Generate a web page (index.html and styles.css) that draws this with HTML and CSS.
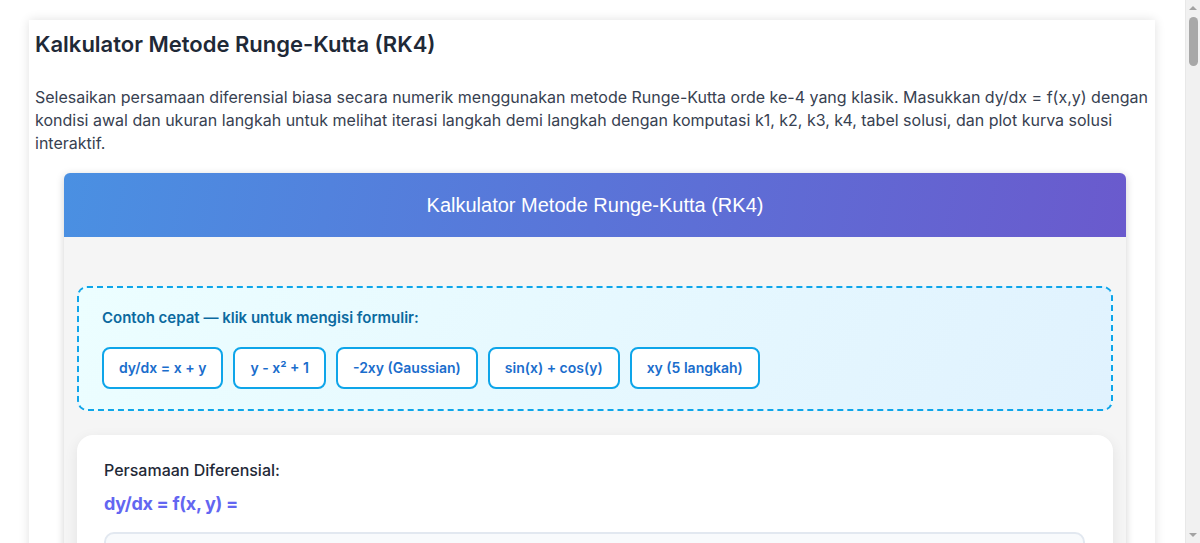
FILE: index.html
```html
<!DOCTYPE html>
<html lang="id">
<head>
<meta charset="utf-8">
<title>Kalkulator Metode Runge-Kutta (RK4)</title>
<link rel="stylesheet" href="styles.css">
</head>
<body>
<main class="page">
  <h1 class="page-title">Kalkulator Metode Runge-Kutta (RK4)</h1>
  <p class="intro">Selesaikan persamaan diferensial biasa secara numerik menggunakan metode Runge-Kutta orde ke-4 yang klasik. Masukkan dy/dx = f(x,y) dengan kondisi awal dan ukuran langkah untuk melihat iterasi langkah demi langkah dengan komputasi k1, k2, k3, k4, tabel solusi, dan plot kurva solusi interaktif.</p>

  <section class="widget">
    <header class="widget-header">Kalkulator Metode Runge-Kutta (RK4)</header>
    <div class="widget-body">
      <div class="examples">
        <div class="examples-label">Contoh cepat — klik untuk mengisi formulir:</div>
        <div class="examples-list">
          <button class="ex-btn">dy/dx = x + y</button>
          <button class="ex-btn">y - x² + 1</button>
          <button class="ex-btn">-2xy (Gaussian)</button>
          <button class="ex-btn">sin(x) + cos(y)</button>
          <button class="ex-btn">xy (5 langkah)</button>
        </div>
      </div>

      <div class="form-card">
        <label class="field-label">Persamaan Diferensial:</label>
        <div class="eq-label">dy/dx = f(x, y) =</div>
        <input class="eq-input" type="text" value="">
      </div>
    </div>
  </section>
</main>
<div class="scrollbar" aria-hidden="true">
  <span class="sb-arrow sb-up"></span>
  <span class="sb-thumb"></span>
  <span class="sb-arrow sb-down"></span>
</div>
</body>
</html>
```

FILE: styles.css
```css
html, body {
  margin: 0;
  padding: 0;
  background: #ffffff;
}
body {
  font-family: Inter, "Noto Sans", sans-serif;
  color: #1f2937;
  padding: 20px 45px 40px 29px;
}
.page {
  background: #ffffff;
  box-shadow: 0 0 10px rgba(0, 0, 0, 0.12);
  padding: 6px 6px 40px;
  min-height: 700px;
}
.page-title {
  margin: 3px 0 0;
  font-size: 22px;
  line-height: 30px;
  font-weight: 600;
  color: #1f2937;
}
.intro {
  margin: 27px 0 0;
  font-size: 16px;
  line-height: 23px;
  color: #374151;
}
.widget {
  margin: 18px 23px 0 29px;
  border-radius: 6px;
  overflow: hidden;
  box-shadow: 0 2px 8px rgba(0, 0, 0, 0.18);
  background: #f5f5f5;
}
.widget-header {
  background: linear-gradient(100deg, #4a90e2 0%, #5a74d8 50%, #6a5acd 100%);
  color: #ffffff;
  text-align: center;
  font-family: "Liberation Sans", Arial, sans-serif;
  font-size: 20px;
  line-height: 24px;
  padding: 20px;
}
.widget-body {
  padding: 49px 13px 40px;
}
.examples {
  border: 2px dashed #0ea5e9;
  border-radius: 10px;
  background: linear-gradient(120deg, #ecfeff 0%, #e0f2fe 100%);
  padding: 20px 23px 20px;
}
.examples-label {
  font-size: 15px;
  line-height: 20px;
  font-weight: 600;
  color: #0b6a9f;
  margin-bottom: 19px;
}
.examples-list {
  display: flex;
  flex-wrap: wrap;
  gap: 10px;
}
.ex-btn {
  font-family: Inter, "Noto Sans", sans-serif;
  font-size: 14px;
  line-height: 18px;
  font-weight: 600;
  color: #1a6dcc;
  background: #ffffff;
  border: 2px solid #0ea5e9;
  border-radius: 8px;
  padding: 10px 15px;
  cursor: pointer;
}
.form-card {
  margin-top: 24px;
  background: #ffffff;
  border-radius: 16px;
  box-shadow: 0 4px 14px rgba(0, 0, 0, 0.08);
  padding: 25px 28px 30px 27px;
}
.field-label {
  display: block;
  font-size: 16px;
  line-height: 20px;
  font-weight: 500;
  color: #1f2937;
}
.eq-label {
  margin-top: 13px;
  font-size: 18px;
  line-height: 22px;
  font-weight: 700;
  letter-spacing: -0.3px;
  color: #6366f1;
}
.eq-input {
  display: block;
  box-sizing: border-box;
  width: 100%;
  margin-top: 17px;
  height: 48px;
  border: 2px solid #e2e8f0;
  border-radius: 10px;
  background: #f8fafc;
  font-size: 16px;
  padding: 0 14px;
}

/* fake browser scrollbar overlay */
.scrollbar {
  position: fixed;
  top: 0;
  right: 0;
  bottom: 0;
  width: 15px;
  background: #f1f1f1;
  border-left: 1px solid #e8e8e8;
  box-sizing: border-box;
}
.sb-thumb {
  position: absolute;
  top: 17px;
  left: 3px;
  width: 9px;
  height: 49px;
  border-radius: 5px;
  background: #a8a8a8;
}
.sb-arrow {
  position: absolute;
  left: 3px;
  width: 0;
  height: 0;
  border-left: 4px solid transparent;
  border-right: 4px solid transparent;
}
.sb-up {
  top: 6px;
  border-bottom: 4px solid #a3a3a3;
}
.sb-down {
  bottom: 6px;
  border-top: 4px solid #a3a3a3;
}
```
